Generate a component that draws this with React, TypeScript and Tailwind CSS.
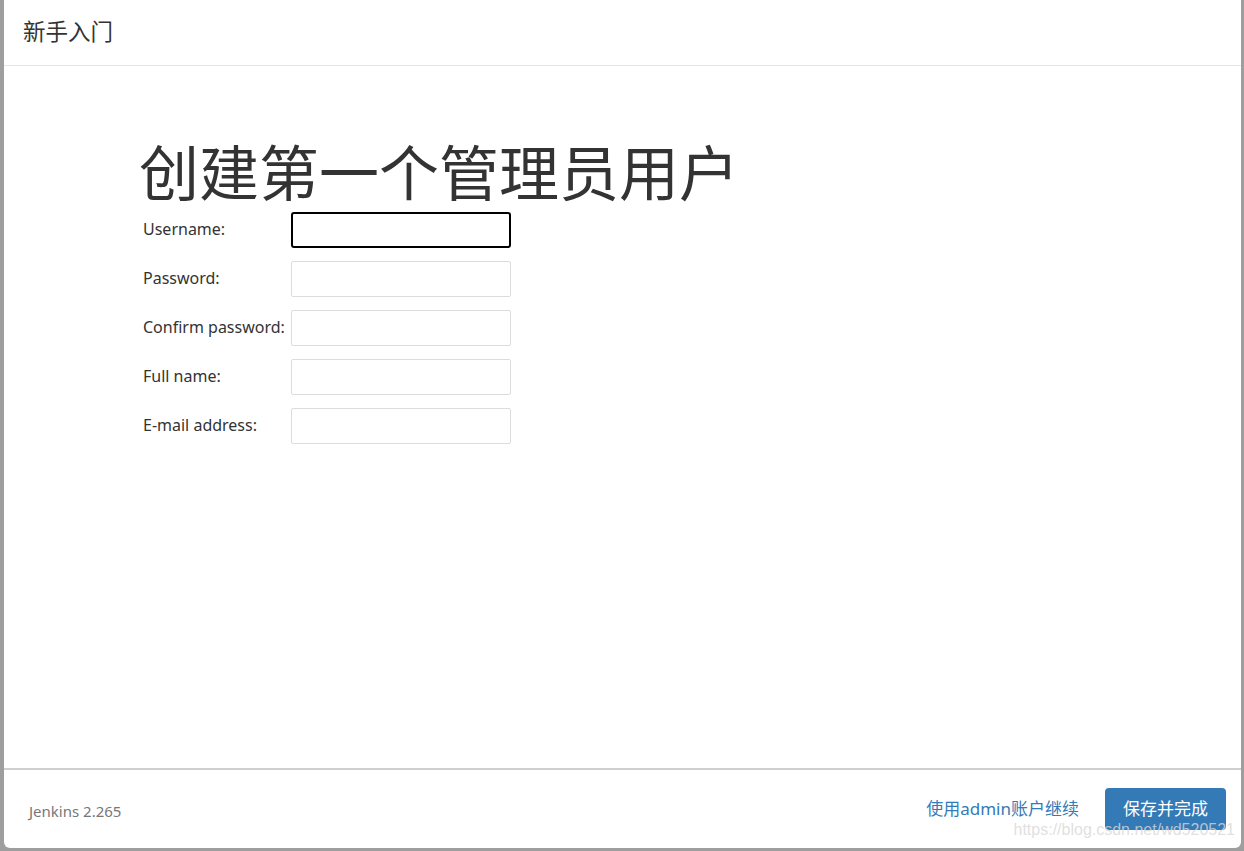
import React from "react";

const fields = [
  { label: "Username:", focused: true },
  { label: "Password:" },
  { label: "Confirm password:" },
  { label: "Full name:" },
  { label: "E-mail address:" },
];

export default function App() {
  return (
    <div
      className="w-[1244px] h-[851px] bg-[#9e9e9e] pl-[4px] pr-[3px] pb-[3px] flex"
      style={{ fontFamily: '"Noto Sans", "Noto Sans CJK SC", sans-serif' }}
    >
      <div className="relative flex-1 bg-white rounded-b-[6px] flex flex-col overflow-hidden">
        <div className="h-[66px] border-b border-[#e5e5e5] flex items-center pl-[19px] shrink-0">
          <span className="text-[22.5px] text-[#333] leading-none">新手入门</span>
        </div>
        <div className="flex-1 pl-[139px] pt-[74px]">
          <h1 className="text-[60px] leading-[66px] text-[#333] -ml-[4px] font-normal">
            创建第一个管理员用户
          </h1>
          <div className="mt-[6px] flex flex-col gap-[13px]">
            {fields.map((f) => (
              <div key={f.label} className="flex items-center h-[36px]">
                <label className="w-[148px] text-[16px] text-[#333] whitespace-nowrap -mt-[2px]">{f.label}</label>
                <input
                  type="text"
                  className={
                    f.focused
                      ? "w-[220px] h-[36px] border-2 border-black rounded-[3px] outline-none"
                      : "w-[220px] h-[36px] border border-[#dcdcdc] rounded-[2px] outline-none"
                  }
                />
              </div>
            ))}
          </div>
        </div>
        <div className="h-[80px] border-t-2 border-[#cfcfcf] flex items-center justify-between pl-[25px] pr-[15px] shrink-0">
          <span className="text-[15px] text-[#777] mt-[4px]">Jenkins 2.265</span>
          <div className="flex items-center gap-[26px]">
            <a className="text-[17px] text-[#337ab7] cursor-pointer">使用admin账户继续</a>
            <button className="h-[42px] px-[18px] bg-[#337ab7] text-white text-[17px] rounded-[4px]">
              保存并完成
            </button>
          </div>
        </div>
        <div
          className="absolute right-[6px] bottom-[6px] text-[16px] text-[#d8d8d8]/80 pointer-events-none"
          style={{ fontFamily: '"Liberation Sans", sans-serif' }}
        >
          https://blog.csdn.net/wd520521
        </div>
      </div>
    </div>
  );
}
